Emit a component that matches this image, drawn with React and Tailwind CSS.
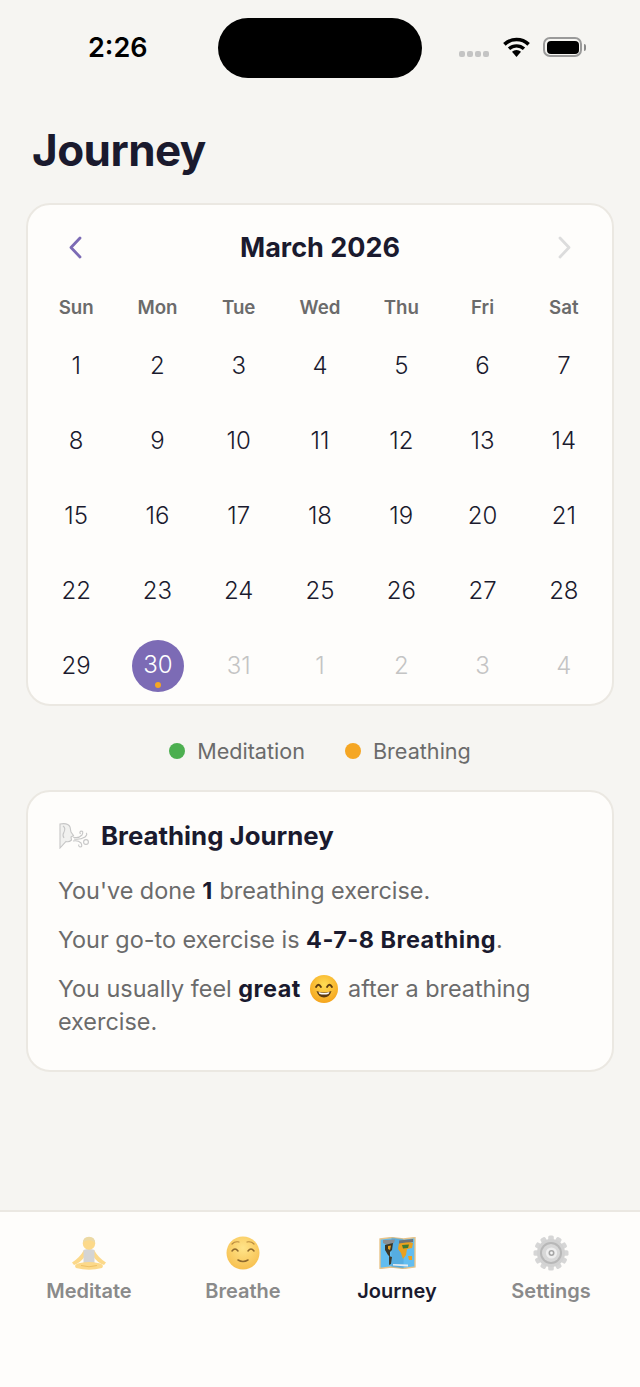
import React from 'react';

const weekdays = ['Sun', 'Mon', 'Tue', 'Wed', 'Thu', 'Fri', 'Sat'];
const days = Array.from({ length: 30 }, (_, i) => ({ label: i + 1, muted: false }));
const trailing = [31, 1, 2, 3, 4].map((label) => ({ label, muted: true }));
const cells = [...days, ...trailing];

function StatusBar() {
  return (
    <div className="relative flex h-[100px] shrink-0 items-start">
      <div className="ml-[88px] mt-[31px] text-[27px] leading-[34px] font-semibold text-black">2:26</div>
      <div className="absolute left-[218px] top-[18px] h-[60px] w-[204px] rounded-full bg-black" />
      <div className="absolute left-[459px] top-[51px] flex gap-[2px]">
        <span className="h-[6px] w-[6px] rounded-[2px] bg-[#c4c4c4]" />
        <span className="h-[6px] w-[6px] rounded-[2px] bg-[#c4c4c4]" />
        <span className="h-[6px] w-[6px] rounded-[2px] bg-[#c4c4c4]" />
        <span className="h-[6px] w-[6px] rounded-[2px] bg-[#c4c4c4]" />
      </div>
      <svg className="absolute left-[503px] top-[36px]" width="27" height="22" viewBox="0 0 27 22">
        <path d="M1.4 8.4 A17.5 17.5 0 0 1 25.6 8.4" fill="none" stroke="#000" strokeWidth="3.6" />
        <path d="M6 12.8 A11 11 0 0 1 21 12.8" fill="none" stroke="#000" strokeWidth="3.4" />
        <path d="M9 15.8 A6.6 6.6 0 0 1 18 15.8 L13.5 21 Z" fill="#000" />
      </svg>
      <div className="absolute left-[543px] top-[37px] flex items-center">
        <div className="h-[20px] w-[39px] rounded-[7px] border-2 border-[#9a9a9a] bg-[#f6f5f2] p-[1.5px]">
          <div className="h-full w-full rounded-[4px] bg-black" />
        </div>
        <div className="ml-[2px] h-[7px] w-[2px] rounded-r-full bg-[#8a8a8a]" />
      </div>
    </div>
  );
}

function Chevron({ direction, color }) {
  const d = direction === 'left' ? 'M15 3 L6 12.5 L15 22' : 'M6 3 L15 12.5 L6 22';
  return (
    <svg width="21" height="25" viewBox="0 0 21 25" fill="none">
      <path d={d} stroke={color} strokeWidth="2.8" strokeLinecap="round" strokeLinejoin="round" />
    </svg>
  );
}

function Calendar() {
  return (
    <section className="mx-[26px] mt-[3px] h-[503px] overflow-hidden rounded-[24px] border-2 border-[#ebe8e2] bg-[#fefdfb] px-[7.5px]">
      <div className="flex h-[83px] items-center justify-between px-[29px] pt-[2px]">
        <Chevron direction="left" color="#7c6bb5" />
        <h2 className="text-[27px] leading-[34px] font-bold text-[#1a1a2e]">March 2026</h2>
        <Chevron direction="right" color="#dcdcdc" />
      </div>
      <div className="grid grid-cols-7">
        {weekdays.map((day) => (
          <div key={day} className="h-[40px] text-center text-[18.7px] leading-[40px] font-semibold text-[#6b6b6b]">{day}</div>
        ))}
      </div>
      <div className="grid grid-cols-7 auto-rows-[75px]">
        {cells.map((cell) => {
          const today = !cell.muted && cell.label === 30;
          return (
            <div key={`${cell.muted}-${cell.label}`} className="flex items-center justify-center">
              {today ? (
                <div className="relative ml-[1px] flex h-[52px] w-[52px] items-center justify-center rounded-full bg-[#7c6bb5] text-[24px] font-light text-white">
                  <span className="mb-[2px]">30</span>
                  <span className="absolute bottom-[4px] left-[23px] h-[6px] w-[6px] rounded-full bg-[#f5a623]" />
                </div>
              ) : (
                <span className={`text-[24px] font-light ${cell.muted ? 'text-[#c4c4c4]' : 'text-[#1a1a2e]'}`}>{cell.label}</span>
              )}
            </div>
          );
        })}
      </div>
    </section>
  );
}

function Legend() {
  return (
    <div className="flex h-[84px] items-center justify-center gap-[40px] pt-[6px] text-[21.6px] text-[#6b6b6b]">
      <div className="flex items-center gap-[12px]">
        <span className="h-[16px] w-[16px] rounded-full bg-[#4caf50]" />
        Meditation
      </div>
      <div className="flex items-center gap-[12px]">
        <span className="h-[16px] w-[16px] rounded-full bg-[#f5a623]" />
        Breathing
      </div>
    </div>
  );
}

function WindFace() {
  return (
    <svg width="32" height="26" viewBox="0 0 32 26" fill="none" stroke="#c6c6c6" strokeWidth="1.1">
      <path d="M2 1 Q10 -0.5 12 4 L13 9 L15.5 12.5 L13 14 L13.5 17 Q11 19.5 8 18.5 L2 25 Z" fill="#f1f1ef" />
      <path d="M5 3 Q8 5 6 9 Q4 12 6 15" />
      <path d="M15 14 Q20 16 24 12 Q26 8 23 8 Q21 9 22.5 11" />
      <path d="M16 16 Q22 17 27 14 Q30 11 28 10" />
      <path d="M15 18 Q20 17 23 20 Q25 24 22 24 Q20 23 21 21.5" />
      <circle cx="28" cy="19" r="2.4" />
    </svg>
  );
}

function Grin() {
  return (
    <svg className="mx-[3px] inline-block align-[-6px]" width="28" height="28" viewBox="0 0 28 28">
      <defs>
        <radialGradient id="grin" cx="50%" cy="35%" r="65%">
          <stop offset="0%" stopColor="#ffdd55" />
          <stop offset="100%" stopColor="#f5a41c" />
        </radialGradient>
      </defs>
      <circle cx="14" cy="14" r="14" fill="url(#grin)" />
      <path d="M6 12 Q8.5 7.5 11 12 M17 12 Q19.5 7.5 22 12" fill="none" stroke="#5b3a10" strokeWidth="1.8" strokeLinecap="round" />
      <path d="M6.5 16 Q14 19 21.5 16 Q19.5 22.5 14 22.5 Q8.5 22.5 6.5 16 Z" fill="#5b3a10" />
      <path d="M8.5 17 Q14 19 19.5 17 L18.5 19 Q14 20 9.5 19 Z" fill="#fff" />
    </svg>
  );
}

function BreathingCard() {
  const strong = 'font-bold tracking-[0.5px] text-[#1a1a2e]';
  return (
    <section className="mx-[26px] h-[282px] rounded-[24px] border-2 border-[#ebe8e2] bg-[#fefdfb] pl-[30px] pr-[29px] pt-[26px]">
      <div className="flex h-[36px] items-center gap-[11px]">
        <WindFace />
        <h3 className="text-[25.8px] font-bold text-[#1a1a2e]">Breathing Journey</h3>
      </div>
      <div className="mt-[20px] text-[23.4px] leading-[33px] text-[#6b6b6b]">
        <p>You've done <span className={strong}>1</span> breathing exercise.</p>
        <p className="mt-[16px]">Your go-to exercise is <span className={strong}>4-7-8 Breathing</span>.</p>
        <p className="mt-[16px]">You usually feel <span className={strong}>great</span> <Grin /> after a breathing exercise.</p>
      </div>
    </section>
  );
}

function MeditateIcon() {
  return (
    <svg width="36" height="35" viewBox="0 0 36 35">
      <path d="M13 14 Q8.5 22 1 26.5 L3 29 Q10 26.5 14 20 Z M23 14 Q27.5 22 35 26.5 L33 29 Q26 26.5 22 20 Z" fill="#fcd98a" />
      <path d="M12.5 14 Q18 12 23.5 14 L23.5 27 L12.5 27 Z" fill="#d4d4d4" />
      <circle cx="18" cy="7.5" r="6.2" fill="#fcd98a" />
      <path d="M11.8 7 Q12 0.8 18 0.8 Q24 0.8 24.2 7 Q21 3.8 18 4.2 Q14 3.8 11.8 7 Z" fill="#ecd9a4" />
      <path d="M9 27 Q18 25 27 27 Q34 28.5 31 32 Q18 35.5 5 32 Q2 28.5 9 27 Z" fill="#fcd98a" />
      <path d="M10 29.5 Q18 32 26 29.5" fill="none" stroke="#e9b95c" strokeWidth="0.8" />
    </svg>
  );
}

function BreatheIcon() {
  return (
    <svg width="34" height="34" viewBox="0 0 34 34">
      <defs>
        <radialGradient id="calm" cx="50%" cy="35%" r="65%">
          <stop offset="0%" stopColor="#ffe48a" />
          <stop offset="100%" stopColor="#f7c04f" />
        </radialGradient>
      </defs>
      <circle cx="17" cy="17" r="16.5" fill="url(#calm)" />
      <path d="M6 8 Q9 5 13 6 M21 6 Q25 5 28 8" fill="none" stroke="#b98a3e" strokeWidth="1.2" strokeLinecap="round" />
      <path d="M6 15 Q9 11 12 15 M22 15 Q25 11 28 15 M12 24 Q17 27 22 24" fill="none" stroke="#8f6a2e" strokeWidth="1.5" strokeLinecap="round" />
    </svg>
  );
}

function JourneyIcon() {
  return (
    <svg width="37" height="32" viewBox="0 0 37 32">
      <path d="M1 2 L12.5 0.5 L24.5 2 L36 0.5 L36 30 L24.5 31.5 L12.5 30 L1 31.5 Z" fill="#62bdf0" stroke="#e8c48a" strokeWidth="1.4" />
      <path d="M12.5 0.5 L24.5 2 L24.5 31.5 L12.5 30 Z" fill="#4a9ed0" opacity="0.5" />
      <path d="M4 3 L16 2.5 L15 6 L8 8 L4 6 Z" fill="#8a8f94" />
      <path d="M6 8 L14 6 L13 13 L11 15 L11 20 L9 18 L6 13 Z" fill="#3a3526" />
      <path d="M9 9 L12 8.5 L11 13 L9 12 Z" fill="#e9a11f" />
      <path d="M10 19 L13 20 L12 27 L10 28 Z" fill="#3f3a2a" />
      <path d="M20 6 L28 4 L34 6 L33 11 L28 12 L27 18 L24 22 L22 16 L19 12 Z" fill="#e9a11f" />
      <path d="M20 3.5 L34 2 L34 5 L27 5.5 L20 6.5 Z" fill="#6d7378" />
      <path d="M23 8 L30 7.5 L29 11 L24 11.5 Z" fill="#3f7a34" />
      <path d="M29 19 L33 19 L33 23 L30 23 Z" fill="#e9a11f" />
      <path d="M14 27 L29 27.5 L29 29.5 L14 28.5 Z" fill="#e6ecf0" />
    </svg>
  );
}

function SettingsIcon() {
  const teeth = [0, 30, 60, 90, 120, 150, 180, 210, 240, 270, 300, 330];
  return (
    <svg width="36" height="36" viewBox="0 0 36 36">
      {teeth.map((angle) => (
        <rect key={angle} x="15.2" y="0.5" width="5.6" height="7" rx="1.6" fill="#d6d6d6" transform={`rotate(${angle} 18 18)`} />
      ))}
      <circle cx="18" cy="18" r="14" fill="#d2d2d2" />
      <circle cx="18" cy="18" r="11" fill="#b8b8b8" />
      <circle cx="18" cy="18" r="9" fill="#d8d8d8" />
      <circle cx="18.5" cy="18" r="5.6" fill="#efefef" />
      <circle cx="18.5" cy="18" r="3" fill="#a6a6a6" />
      <circle cx="18.5" cy="18" r="1.4" fill="#f6f6f6" />
    </svg>
  );
}

const tabs = [
  { label: 'Meditate', Icon: MeditateIcon },
  { label: 'Breathe', Icon: BreatheIcon },
  { label: 'Journey', Icon: JourneyIcon, active: true },
  { label: 'Settings', Icon: SettingsIcon },
];

function TabBar() {
  return (
    <nav className="mt-auto grid h-[177px] shrink-0 grid-cols-4 border-t-2 border-[#ebe8e2] bg-[#fefdfb] px-[12px]">
      {tabs.map(({ label, Icon, active }) => (
        <div key={label} className="flex flex-col items-center">
          <div className="mt-[23px] flex h-[36px] items-center justify-center">
            <Icon />
          </div>
          <span className={`mt-[5px] text-[20px] leading-[30px] font-semibold ${active ? 'text-[#1a1a2e]' : 'text-[#8a8a8a]'}`}>{label}</span>
        </div>
      ))}
    </nav>
  );
}

export default function App() {
  return (
    <div className="flex h-[1387px] w-[640px] flex-col overflow-hidden bg-[#f6f5f2] [font-family:Inter,sans-serif]">
      <StatusBar />
      <h1 className="ml-[32px] text-[44px] leading-[100px] font-bold tracking-[-0.55px] text-[#1a1a2e]">Journey</h1>
      <Calendar />
      <Legend />
      <BreathingCard />
      <TabBar />
    </div>
  );
}
